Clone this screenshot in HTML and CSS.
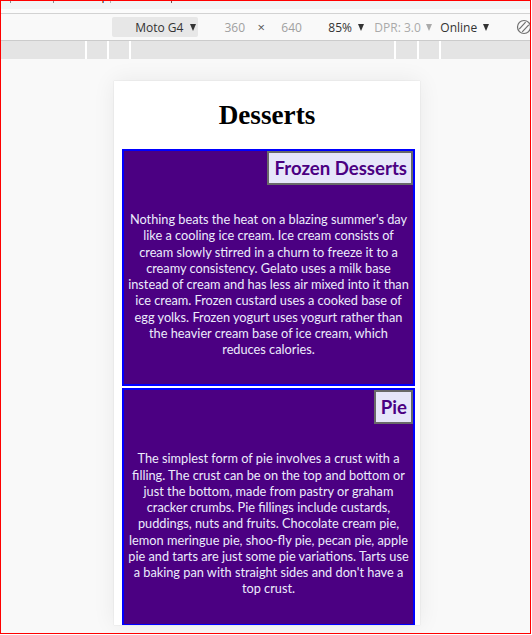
FILE: index.html
```html
<!DOCTYPE html>
<html>
<head>
<meta charset="utf-8">
<title>Desserts</title>
<link rel="stylesheet" href="styles.css">
</head>
<body>
<div class="frame">
  <div class="tabstrip">
    <i class="tick t1"></i><i class="tick t2"></i><i class="tick t3"></i><i class="tick t4"></i><i class="tick t5"></i><i class="tick t6"></i>
  </div>
  <div class="topgap"></div>
  <div class="toolbar">
    <div class="device-select"><span>Moto G4</span><span class="caret"></span></div>
    <span class="item dim w360">360</span>
    <span class="item times">×</span>
    <span class="item dim w640">640</span>
    <span class="item zoomsel">85%<span class="caret"></span></span>
    <span class="item dpr">DPR: 3.0<span class="caret light"></span></span>
    <span class="item net">Online<span class="caret"></span></span>
    <svg class="rotate" width="22" height="16" viewBox="0 0 22 16">
      <circle cx="16" cy="8" r="6.5" fill="none" stroke="#6e6e6e" stroke-width="1.2"/>
      <path d="M11.2 10.2 L17.6 3.2 M14.2 12.8 L20.8 5.8" stroke="#6e6e6e" stroke-width="1.2" fill="none"/>
    </svg>
  </div>
  <div class="ruler">
    <span class="seg s1"></span><span class="seg s2"></span><span class="seg s3"></span><span class="seg s4"></span><span class="seg s5"></span><span class="seg s6"></span><span class="seg s7"></span>
  </div>
  <div class="stage">
    <div class="viewport">
      <h1>Desserts</h1>
      <section class="card">
        <h2>Frozen Desserts</h2>
        <p>Nothing beats the heat on a blazing summer's day<br>like a cooling ice cream. Ice cream consists of<br>cream slowly stirred in a churn to freeze it to a<br>creamy consistency. Gelato uses a milk base<br>instead of cream and has less air mixed into it than<br>ice cream. Frozen custard uses a cooked base of<br>egg yolks. Frozen yogurt uses yogurt rather than<br>the heavier cream base of ice cream, which<br>reduces calories.</p>
      </section>
      <section class="card">
        <h2>Pie</h2>
        <p>The simplest form of pie involves a crust with a<br>filling. The crust can be on the top and bottom or<br>just the bottom, made from pastry or graham<br>cracker crumbs. Pie fillings include custards,<br>puddings, nuts and fruits. Chocolate cream pie,<br>lemon meringue pie, shoo-fly pie, pecan pie, apple<br>pie and tarts are just some pie variations. Tarts use<br>a baking pan with straight sides and don't have a<br>top crust.</p>
      </section>
    </div>
  </div>
</div>
</body>
</html>
```
FILE: styles.css
```css
html, body {
  margin: 0;
  padding: 0;
  background: #ffffff;
}

.frame {
  box-sizing: border-box;
  width: 531px;
  height: 634px;
  border: 1px solid #ff0000;
  overflow: hidden;
  display: flex;
  flex-direction: column;
  font-family: "Open Sans", "Noto Sans", sans-serif;
}

.tabstrip {
  height: 8px;
  background: #f1f3f4;
  display: flex;
  align-items: flex-start;
  flex-shrink: 0;
}

.tick {
  display: block;
  width: 1px;
  height: 2px;
  background: #8a8a8a;
}
.t1 { margin-left: 9px; }
.t2 { margin-left: 42px; }
.t3 { margin-left: 48px; background: #e8822a; }
.t4 { margin-left: 0; background: #4a7fd6; }
.t5 { margin-left: 6px; background: #b0b0b0; }
.t6 { margin-left: 60px; background: #7a4a4a; }

.topgap {
  height: 4px;
  background: #fbfbfb;
  flex-shrink: 0;
}

.toolbar {
  height: 26px;
  border-top: 1px solid #d2d2d2;
  border-bottom: 1px solid #cbcbcb;
  background: #f9f9f9;
  display: flex;
  align-items: center;
  font-size: 12px;
  color: #333333;
  flex-shrink: 0;
  white-space: nowrap;
}

.device-select {
  margin-left: 111px;
  width: 87px;
  height: 20px;
  box-sizing: border-box;
  background: #e7e7e7;
  border-radius: 2px;
  display: flex;
  align-items: center;
  justify-content: flex-end;
  padding-right: 2px;
  gap: 7px;
}

.caret {
  display: inline-block;
  width: 0;
  height: 0;
  border-left: 3.5px solid transparent;
  border-right: 3.5px solid transparent;
  border-top: 7px solid #333333;
  margin-left: 6px;
  vertical-align: middle;
}
.device-select .caret { margin-left: 0; }
.caret.light { border-top-color: #aaaaaa; margin-left: 5px; }

.item {
  display: inline-flex;
  align-items: center;
}

.dim { color: #a0a0a0; width: 18px; }
.w360 { margin-left: 26px; }
.times { margin-left: 15px; width: 9px; color: #555555; font-size: 13px; }
.w640 { margin-left: 15px; }
.zoomsel { margin-left: 29px; width: 34px; }
.dpr { margin-left: 12px; width: 55px; color: #aaaaaa; }
.net { margin-left: 11px; width: 50px; }
.rotate { margin-left: 18px; flex-shrink: 0; }

.ruler {
  height: 18px;
  background: #e4e4e4;
  display: flex;
  flex-shrink: 0;
}
.seg {
  display: block;
  box-sizing: border-box;
  border-right: 2px solid #ffffff;
  height: 100%;
}
.s1 { width: 86px; }
.s2 { width: 22px; }
.s3 { width: 22px; }
.s4 { width: 265px; }
.s5 { width: 23px; }
.s6 { width: 22px; }
.s7 { flex: 1; border-right: none; }

.stage {
  flex: 1;
  background: #f9f9f9;
  padding: 22px 0 0 113px;
  overflow: hidden;
}

.viewport {
  width: 306px;
  height: 544px;
  background: #ffffff;
  overflow: hidden;
  box-shadow: 0 0 1px rgba(0, 0, 0, 0.18), 0 0 22px rgba(0, 0, 0, 0.07);
  padding-top: 1px;
  box-sizing: border-box;
}

h1 {
  font-family: "Liberation Serif", "Times New Roman", serif;
  font-weight: bold;
  font-size: 27.2px;
  line-height: 31px;
  margin: 18px 0 18px;
  text-align: center;
  color: #000000;
}

.card {
  box-sizing: border-box;
  width: 293px;
  margin-left: 8px;
  border: 2px solid #0000ff;
  background: #4b0082;
  display: flex;
  flex-direction: column;
}
.card + .card {
  margin-top: 2px;
}

h2 {
  align-self: flex-end;
  margin: 0;
  font-family: Lato, "Open Sans", sans-serif;
  font-weight: bold;
  font-size: 18.6px;
  line-height: 30px;
  padding: 0 4px 0 5px;
  background: #e6e6fa;
  border: 2px solid #696969;
  color: #4b0082;
}

.card p {
  margin: 26px 0 0;
  padding-bottom: 27px;
  font-family: Lato, "Open Sans", sans-serif;
  font-size: 12.75px;
  line-height: 16.25px;
  color: #ececfc;
  text-align: center;
  white-space: nowrap;
}
```
